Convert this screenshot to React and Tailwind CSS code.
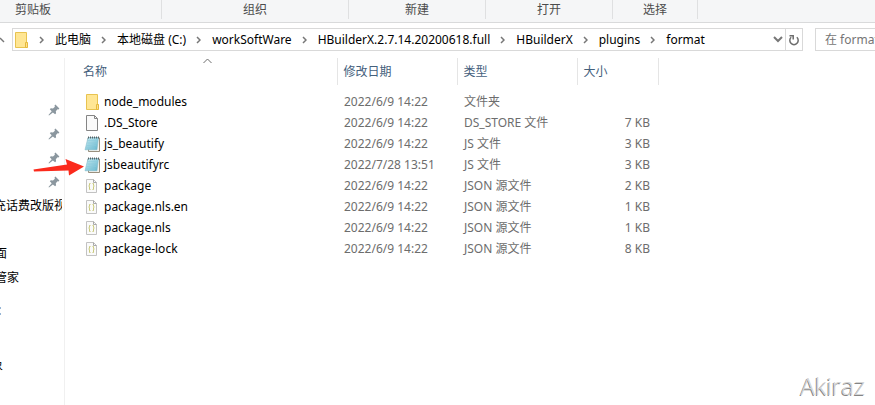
import React from "react";

const ribbon = [
  { name: "剪贴板", cell: "w-[162px] pl-[15px]" },
  { name: "组织", cell: "w-[187px] text-center" },
  { name: "新建", cell: "w-[137px] text-center" },
  { name: "打开", cell: "w-[127px] text-center" },
  { name: "选择", cell: "w-[85px] text-center" },
];

const crumbs = ["此电脑", "本地磁盘 (C:)", "workSoftWare", "HBuilderX.2.7.14.20200618.full", "HBuilderX", "plugins", "format"];

const files = [
  { name: "node_modules", icon: "folder", date: "2022/6/9 14:22", type: "文件夹", size: "" },
  { name: ".DS_Store", icon: "blank", date: "2022/6/9 14:22", type: "DS_STORE 文件", size: "7 KB" },
  { name: "js_beautify", icon: "note", date: "2022/6/9 14:22", type: "JS 文件", size: "3 KB" },
  { name: "jsbeautifyrc", icon: "note", date: "2022/7/28 13:51", type: "JS 文件", size: "3 KB", marked: true },
  { name: "package", icon: "json", date: "2022/6/9 14:22", type: "JSON 源文件", size: "2 KB" },
  { name: "package.nls.en", icon: "json", date: "2022/6/9 14:22", type: "JSON 源文件", size: "1 KB" },
  { name: "package.nls", icon: "json", date: "2022/6/9 14:22", type: "JSON 源文件", size: "1 KB" },
  { name: "package-lock", icon: "json", date: "2022/6/9 14:22", type: "JSON 源文件", size: "8 KB" },
];

function Folder() {
  return (
    <svg width="16" height="16" viewBox="0 0 16 16" className="shrink-0">
      <path d="M2.500.5h11v9.500l.5.8v4.700h-11.500z" fill="#ffe694" stroke="#e8c350" />
      <path d="M12.500 10.500h2v5h-2z" fill="#ffe08a" stroke="#e5b93c" />
    </svg>
  );
}

function Blank() {
  return (
    <svg width="16" height="16" viewBox="0 0 16 16" className="shrink-0">
      <path d="M2.500.5h8l3 3v12h-11z" fill="#fafafa" stroke="#858585" />
      <path d="M10.500.5v3h3" fill="none" stroke="#858585" />
    </svg>
  );
}

function Note() {
  return (
    <svg width="16" height="16" viewBox="0 0 16 16" className="shrink-0">
      <defs>
        <linearGradient id="cover" x1="0" y1="0" x2="1" y2="1">
          <stop offset="0" stopColor="#c9ebf2" />
          <stop offset="1" stopColor="#62b5cd" />
        </linearGradient>
      </defs>
      <path d="M4 2h11.500v13.500H4.500v-2z" fill="#f5f3ee" stroke="#8e8371" strokeWidth=".9" />
      <path d="M4 1.500h10.500L13 13.800H1z" fill="url(#cover)" stroke="#79b5c6" strokeWidth=".5" />
      <path d="M4 4.500h9M3.500 7h9M3 9.500h9M2.500 12h9" stroke="#8bcbdb" strokeWidth=".6" />
      <path d="M4.500 2.500V.5M6.500 2.500V.5M8.500 2.500V.5M10.500 2.500V.5M12.500 2.500V.5M14.500 2.500V.5" stroke="#4d5659" strokeWidth=".9" />
    </svg>
  );
}

function Json() {
  return (
    <svg width="16" height="16" viewBox="0 0 16 16" className="shrink-0">
      <path d="M2.500 1.500h7l3 3v10h-10z" fill="#fafafa" stroke="#c2c2c2" />
      <path d="M9.500 1.500v3h3" fill="none" stroke="#a9a9a9" />
      <path d="M6.500 5.500h-1v2l-.8.500.8.500v3h1M8.500 5.500h1v2l.8.500-.8.500v3h-1" fill="none" stroke="#c9c97c" />
    </svg>
  );
}

const icons = { folder: Folder, blank: Blank, note: Note, json: Json };

function Pin() {
  return (
    <svg width="12" height="12" viewBox="0 0 12 12" fill="#8b979f">
      <path d="M7.400.6 11.400 4.500l-.9 1-1-.2-1.700 1.900.3 2.100-1 1L4.900 8.400 1 11.500l-.5-.5L3.700 7.300 1.800 5.300l1-1 2.200.2L6.900 2.700l-.4-1.100z" />
    </svg>
  );
}

function Crumb() {
  return (
    <svg width="5" height="8" viewBox="0 0 5 8" className="shrink-0">
      <path d="M1 1l3 3-3 3" fill="none" stroke="#777" strokeWidth="1.5" />
    </svg>
  );
}

export default function App() {
  return (
    <div className="relative flex min-h-screen flex-col overflow-hidden bg-white font-['Noto_Sans','Noto_Sans_CJK_SC',sans-serif] text-[12px] leading-[20px] text-black">
      <header className="flex h-[23px] border-b border-[#d9dadb] bg-[#f5f6f7] text-[#4c4c4c]">
        {ribbon.map((group) => (
          <div key={group.name} className={`mb-[3px] shrink-0 border-r border-[#dfe0e1] ${group.cell}`}>{group.name}</div>
        ))}
      </header>

      <nav className="flex pt-[5px]">
        <button aria-label="上移" className="flex w-3 items-center">
          <svg width="5" height="8" viewBox="0 0 5 8"><path d="M0 2l4 4" stroke="#777" strokeWidth="1.5" fill="none" /></svg>
        </button>
        <div className="flex h-[23px] min-w-0 flex-1 border border-[#d9d9d9]">
          <div className="flex min-w-0 flex-1 items-center overflow-hidden">
            <Folder />
            {crumbs.map((crumb) => (
              <React.Fragment key={crumb}>
                <span className="flex w-[26px] shrink-0 items-center pl-[10px]"><Crumb /></span>
                <a href="#" className="shrink-0 whitespace-nowrap">{crumb}</a>
              </React.Fragment>
            ))}
          </div>
          <button aria-label="历史记录" className="flex w-[14px] items-center justify-center">
            <svg width="10" height="7" viewBox="0 0 10 7"><path d="M1 1l4 4 4-4" fill="none" stroke="#777" strokeWidth="2" /></svg>
          </button>
          <button aria-label="刷新" className="flex w-[17px] items-center justify-center border-l border-[#d9d9d9]">
            <svg width="12" height="12" viewBox="0 0 12 12" fill="none" stroke="#6d6d6d" strokeWidth="1.5">
              <path d="M8.800 3.300A4.200 4.200 0 1 1 3.200 3.300" />
              <path d="M1.500 1.700H5.200V5.500" />
            </svg>
          </button>
        </div>
        <input aria-label="搜索" placeholder="在 format 中搜索" className="ml-3 h-[23px] w-[60px] border border-r-0 border-[#d9d9d9] pl-[9px] placeholder:text-[#757575]" />
      </nav>

      <div className="mt-[7px] flex flex-1">
        <aside className="w-[65px] shrink-0 overflow-hidden border-r border-[#f0f0f0] pt-10">
          {[1, 2, 3, 4].map((n) => (
            <div key={n} className="flex h-6 items-center justify-end pr-1"><Pin /></div>
          ))}
          <div className="mr-[2px] overflow-hidden">
            <div className="-ml-[6px] h-6 whitespace-nowrap leading-6">充话费改版视</div>
          </div>
          <div className="-ml-[5px] mt-6 h-6 leading-6">面</div>
          <div className="-ml-[5px] h-6 leading-6">管家</div>
          <svg width="2" height="10" viewBox="0 0 2 10" className="mt-4"><path d="M0 2h1M0 8h1" stroke="#2f6cab" /></svg>
          <div className="-ml-[9px] mt-[38px] h-6 leading-6">象</div>
        </aside>

        <main className="min-w-0 flex-1">
          <table className="w-[593px] table-fixed border-collapse text-left">
            <colgroup>
              <col className="w-[272px]" />
              <col className="w-[120px]" />
              <col className="w-[120px]" />
              <col className="w-[81px]" />
            </colgroup>
            <thead>
              <tr className="h-[27px] text-[#44607c]">
                <th className="relative border-r border-[#e5e5e5] p-0 pl-[18px] font-normal">
                  名称
                  <svg width="9" height="6" viewBox="0 0 9 6" className="absolute left-[138px] top-0"><path d="M.5 5l4-4 4 4" fill="none" stroke="#6d6d6d" /></svg>
                </th>
                <th className="border-r border-[#e5e5e5] p-0 pl-[6px] font-normal">修改日期</th>
                <th className="border-r border-[#e5e5e5] p-0 pl-[6px] font-normal">类型</th>
                <th className="border-r border-[#e5e5e5] p-0 pl-[6px] font-normal">大小</th>
              </tr>
            </thead>
            <tbody className="text-[#6d6d6d] before:block before:h-[6px]">
              {files.map((file) => {
                const Icon = icons[file.icon];
                return (
                  <tr key={file.name} className="h-[21px]">
                    <td className="relative p-0 pl-[19px] text-black">
                      <div className="flex items-center gap-1"><Icon />{file.name}</div>
                      {file.marked && (
                        <svg width="51" height="18" viewBox="0 0 51 18" className="absolute -left-[32px] top-[4px]">
                          <path d="M.5 11.500 34 6.500 32.500 1 51 8.500 36 17.500 35.500 12.500 1 13.500z" fill="#fb2a1c" />
                        </svg>
                      )}
                    </td>
                    <td className="p-0 pl-[7px]">{file.date}</td>
                    <td className="p-0 pl-[7px]">{file.type}</td>
                    <td className="p-0 pr-[8px] text-right">{file.size}</td>
                  </tr>
                );
              })}
            </tbody>
          </table>
        </main>
      </div>
      <div className="absolute bottom-[2px] right-[10px] font-['Open_Sans',sans-serif] text-[24px] font-light leading-[34px] text-[#d5d5d5] [text-shadow:-1px_1px_0_#858585]">Akiraz</div>
    </div>
  );
}
